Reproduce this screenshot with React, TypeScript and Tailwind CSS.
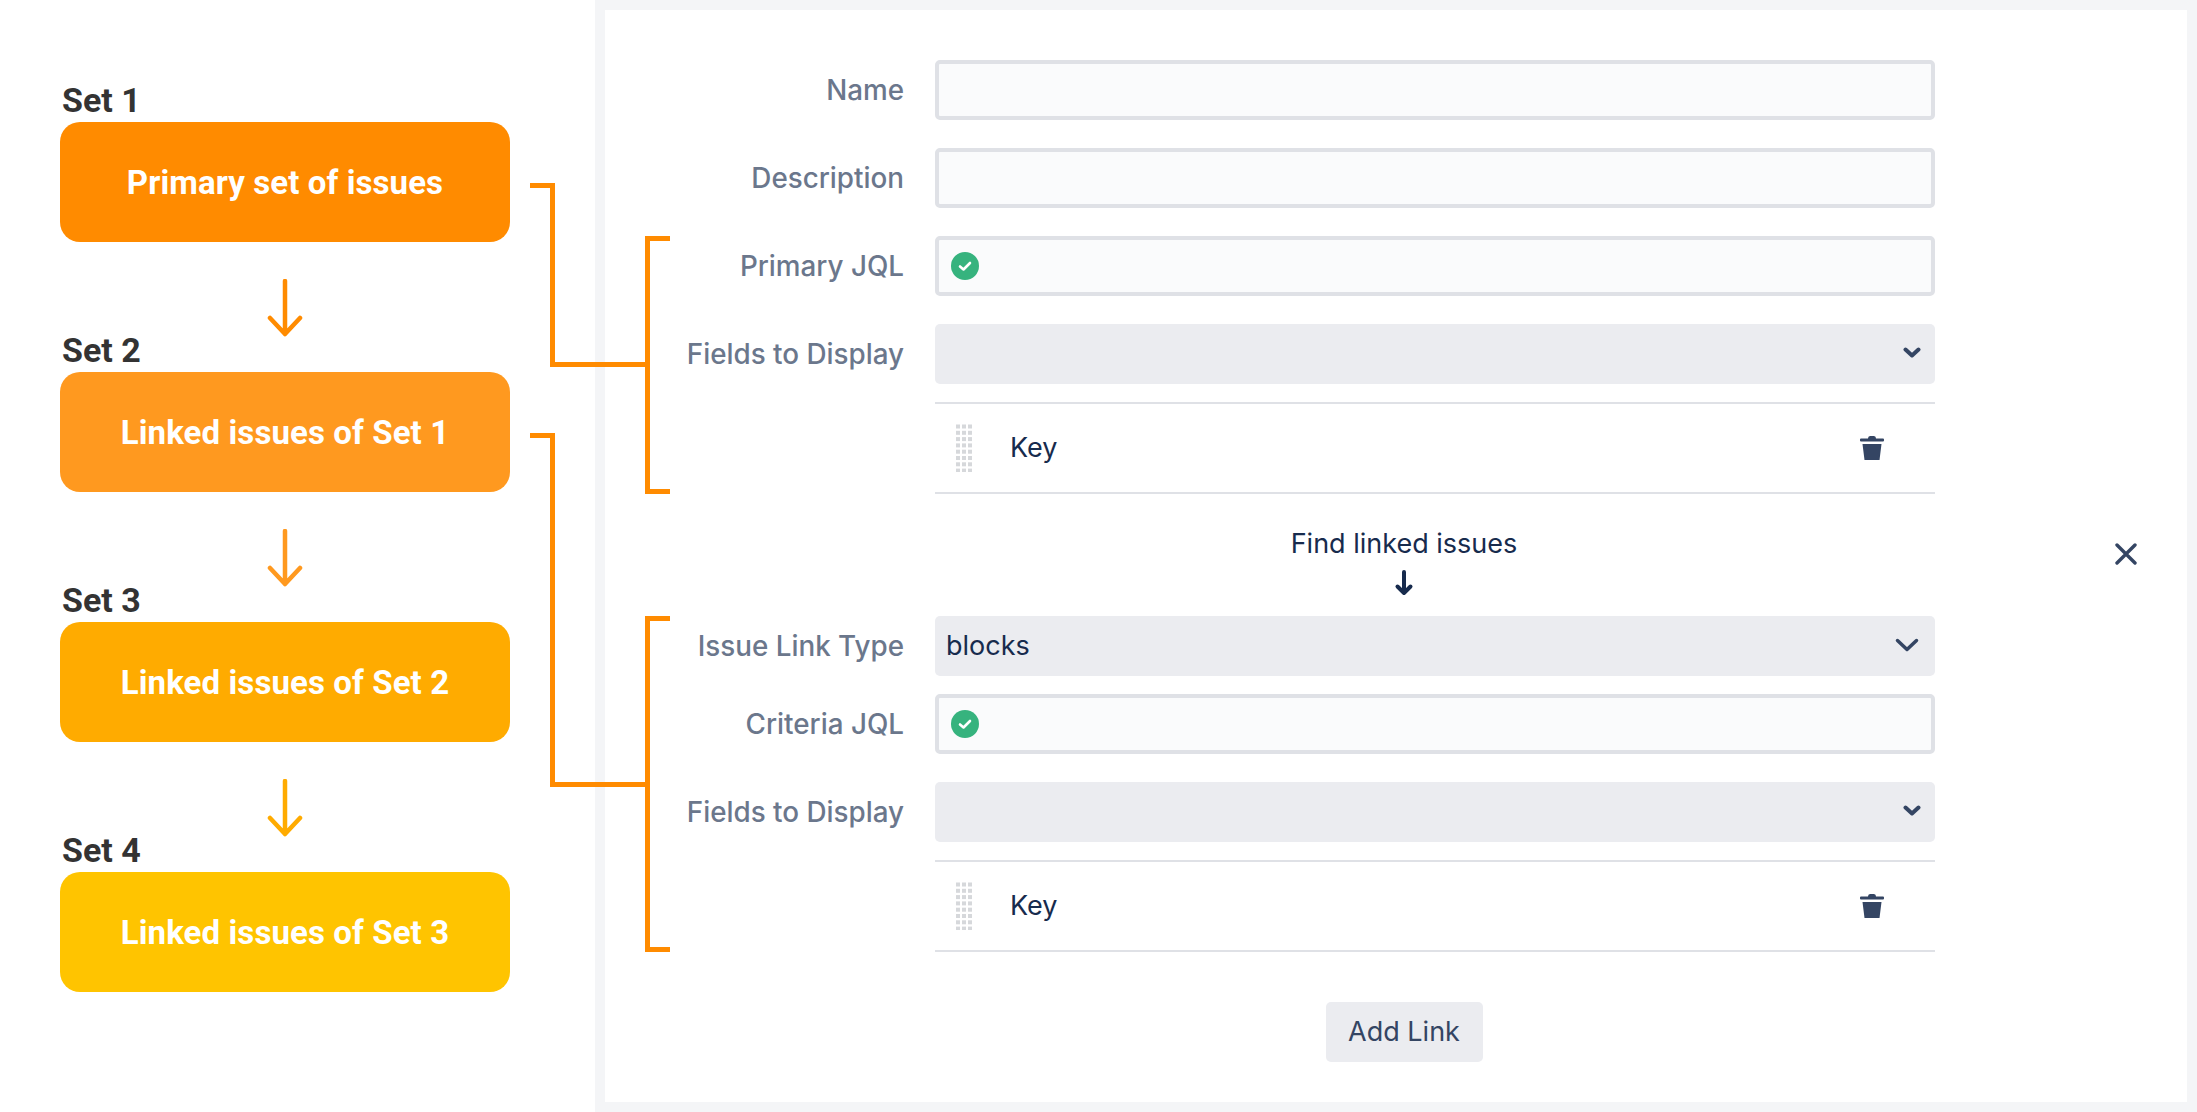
const sets = [
  { label: "Set 1", text: "Primary set of issues", bg: "bg-[#ff8b00]", arrow: "#ff8b00" },
  { label: "Set 2", text: "Linked issues of Set 1", bg: "bg-[#ff991f]", arrow: "#ff991f" },
  { label: "Set 3", text: "Linked issues of Set 2", bg: "bg-[#ffab00]", arrow: "#ffab00" },
  { label: "Set 4", text: "Linked issues of Set 3", bg: "bg-[#ffc400]", arrow: "" },
];

const Chevron = ({ size }: { size: "small" | "large" }) =>
  size === "small" ? (
    <svg width="18" height="12" viewBox="0 0 18 12" className="absolute right-[14px] top-[23px]">
      <path d="M2.5 2.5 L9 8.5 L15.5 2.5" fill="none" stroke="#344563" strokeWidth="4" strokeLinecap="round" strokeLinejoin="round" />
    </svg>
  ) : (
    <svg width="24" height="15" viewBox="0 0 24 15" className="absolute right-[16px] top-[22px]">
      <path d="M2.5 2.5 L12 11.5 L21.5 2.5" fill="none" stroke="#344563" strokeWidth="3.5" strokeLinecap="round" strokeLinejoin="round" />
    </svg>
  );

const CheckCircle = () => (
  <svg width="28" height="28" viewBox="0 0 28 28" className="absolute left-[16px] top-[16px]">
    <circle cx="14" cy="14" r="14" fill="#36b37e" />
    <path d="M9 14.5 L12.5 17.5 L19 11" fill="none" stroke="#ffffff" strokeWidth="2.6" strokeLinecap="round" strokeLinejoin="round" />
  </svg>
);

const Trash = () => (
  <svg width="24" height="24" viewBox="0 0 24 24">
    <path d="M8 2.5 Q8 0 10 0 H14 Q16 0 16 2.5 H23 Q24 2.5 24 3.5 V4.5 Q24 5.5 23 5.5 H1 Q0 5.5 0 4.5 V3.5 Q0 2.5 1 2.5 Z" fill="#344563" />
    <path d="M2.5 8 H21.5 L19.5 24 H4.5 Z" fill="#344563" />
  </svg>
);

const DragDots = () => (
  <svg width="16" height="48" viewBox="0 0 16 48">
    {Array.from({ length: 8 }).map((_, row) =>
      Array.from({ length: 3 }).map((_, col) => (
        <rect key={`${row}-${col}`} x={col * 6} y={row * 6.3 + 0.5} width="4" height="4" fill="#d6d8db" />
      )),
    )}
  </svg>
);

const Field = ({ label, children, className = "" }: { label: string; children: React.ReactNode; className?: string }) => (
  <div className={`flex items-center ${className}`}>
    <div className="w-[299px] text-right text-[27.8px] font-medium leading-[34px] text-[#6b778c]">{label}</div>
    <div className="ml-[31px] w-[1000px]">{children}</div>
  </div>
);

const TextInput = ({ check }: { check?: boolean }) => (
  <div className="relative h-[60px] rounded-[5px] border-[4px] border-[#dfe1e6] bg-[#fafbfc]">
    {check && <div className="absolute -left-[4px] -top-[4px]"><CheckCircle /></div>}
  </div>
);

const Select = ({ value, chevron }: { value?: string; chevron: "small" | "large" }) => (
  <div className="relative flex h-[60px] items-center rounded-[5px] bg-[#ebecf0] pl-[11px] text-[27px] text-[#172b4d]">
    {value}
    <Chevron size={chevron} />
  </div>
);

const KeyRow = () => (
  <div className="ml-[330px] mt-[18px] flex h-[92px] w-[1000px] items-center border-y-2 border-[#dfe1e6]">
    <div className="ml-[21px] w-[54px]"><DragDots /></div>
    <div className="flex-1 pt-[1px] text-[27px] text-[#172b4d]">Key</div>
    <div className="mr-[51px] flex"><Trash /></div>
  </div>
);

export default function App() {
  return (
    <div className="relative flex h-[1112px] w-[2197px] overflow-hidden bg-white font-['Inter',sans-serif]">
      <div className="w-[595px] shrink-0 pl-[60px] pt-[84px] font-['Roboto',sans-serif]">
        {sets.map((s) => (
          <div key={s.label} className="w-[450px]">
            <div className="h-[38px] pl-[2px] text-[34px] font-bold leading-[32px] text-[#333333]">{s.label}</div>
            <div className={`flex h-[120px] items-center justify-center rounded-[20px] pt-[2px] text-[33px] font-bold tracking-[0.1px] text-white ${s.bg}`}>
              {s.text}
            </div>
            {s.arrow && (
              <div className="flex h-[92px] justify-center pt-[37px]">
                <svg width="36" height="58" viewBox="0 0 36 58" fill="none">
                  <path d="M18 2 V55 M3 39 L18 55 L33 39" stroke={s.arrow} strokeWidth="4.5" strokeLinecap="round" strokeLinejoin="round" />
                </svg>
              </div>
            )}
          </div>
        ))}
      </div>

      <div className="flex-1 bg-[#f4f5f7] p-[10px]">
        <div className="flex h-full bg-white pt-[50px]">
          <div className="w-[1330px] shrink-0">
            <Field label="Name"><TextInput /></Field>
            <Field label="Description" className="mt-[28px]"><TextInput /></Field>
            <Field label="Primary JQL" className="mt-[28px]"><TextInput check /></Field>
            <Field label="Fields to Display" className="mt-[28px]"><Select chevron="small" /></Field>
            <KeyRow />

            <div className="ml-[330px] flex h-[122px] w-[938px] flex-col items-center pt-[33px] text-[#172b4d]">
              <div className="text-[27px] leading-[34px]">Find linked issues</div>
              <svg width="20" height="26" viewBox="0 0 20 26" className="mt-[9px]" fill="none">
                <path d="M10 2 V23 M3.5 16.5 L10 23 L16.5 16.5" stroke="#172b4d" strokeWidth="4" strokeLinecap="round" strokeLinejoin="round" />
              </svg>
            </div>

            <Field label="Issue Link Type"><Select value="blocks" chevron="large" /></Field>
            <Field label="Criteria JQL" className="mt-[18px]"><TextInput check /></Field>
            <Field label="Fields to Display" className="mt-[28px]"><Select chevron="small" /></Field>
            <KeyRow />

            <div className="ml-[330px] mt-[50px] flex w-[938px] justify-center">
              <button className="h-[60px] w-[157px] rounded-[5px] bg-[#ebecf0] pt-[1px] text-[27px] text-[#344563]">Add Link</button>
            </div>
          </div>
          <div className="flex-1 pl-[180px] pt-[483px]">
            <svg width="22" height="22" viewBox="0 0 22 22" fill="none">
              <path d="M2 2 L20 20 M20 2 L2 20" stroke="#344563" strokeWidth="3.4" strokeLinecap="round" />
            </svg>
          </div>
        </div>
      </div>

      <svg width="2197" height="1112" viewBox="0 0 2197 1112" fill="none" className="pointer-events-none absolute left-0 top-0">
        <g stroke="#ff8b00" strokeWidth="5">
          <path d="M530 185.5 H552.5 V364.5 H647.5" />
          <path d="M670 238.5 H647.5 V491.5 H670" />
          <path d="M530 435.5 H552.5 V784.5 H647.5" />
          <path d="M670 618.5 H647.5 V949.5 H670" />
        </g>
      </svg>
    </div>
  );
}
